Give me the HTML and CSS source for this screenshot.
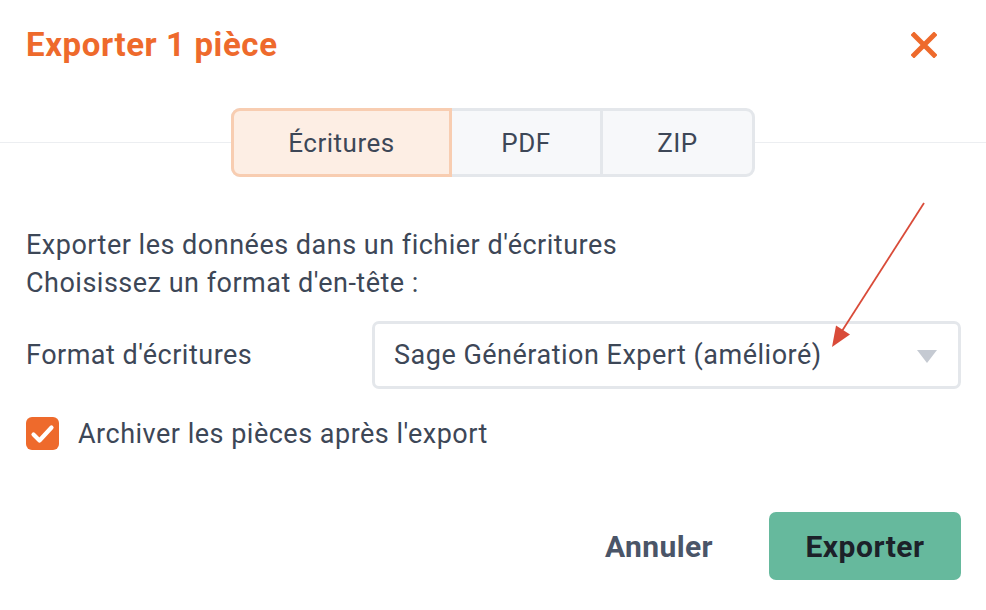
FILE: index.html
```html
<!DOCTYPE html>
<html lang="fr">
<head>
<meta charset="utf-8">
<title>Exporter 1 pièce</title>
<link rel="stylesheet" href="styles.css">
</head>
<body>
<div class="dialog">
  <header class="dialog-header">
    <h1 class="dialog-title">Exporter 1 pièce</h1>
    <button class="close-btn" aria-label="Fermer">
      <svg width="26" height="26" viewBox="0 0 26 26"><path d="M3 3 L23 23 M23 3 L3 23" stroke="#ee6a2c" stroke-width="5" stroke-linecap="square" fill="none"/></svg>
    </button>
  </header>

  <div class="tab-row">
    <div class="tab-line"></div>
    <div class="tabs">
      <div class="tab active">Écritures</div>
      <div class="tab pdf">PDF</div>
      <div class="tab zip">ZIP</div>
    </div>
    <div class="tab-line"></div>
  </div>

  <div class="dialog-body">
    <p class="intro">Exporter les données dans un fichier d'écritures<br>Choisissez un format d'en-tête :</p>

    <div class="field-row">
      <label class="field-label">Format d'écritures</label>
      <div class="select">
        <span class="select-value">Sage Génération Expert (amélioré)</span>
        <svg class="caret" width="20" height="13" viewBox="0 0 20 13"><polygon points="0,0 20,0 10,13" fill="#c5cad2"/></svg>
      </div>
    </div>

    <div class="check-row">
      <span class="checkbox">
        <svg width="25" height="20" viewBox="0 0 25 20"><path d="M3.5 10.5 L9.5 16.5 L21.5 3.5" stroke="#fff" stroke-width="4.2" fill="none" stroke-linecap="round" stroke-linejoin="round"/></svg>
      </span>
      <span class="check-label">Archiver les pièces après l'export</span>
    </div>
  </div>

  <footer class="dialog-footer">
    <button class="btn-cancel">Annuler</button>
    <button class="btn-export">Exporter</button>
  </footer>

  <svg class="annotation" width="986" height="610" viewBox="0 0 986 610">
    <line x1="924" y1="203" x2="842" y2="331" stroke="#d94b39" stroke-width="1.8"/>
    <polygon points="832,347 836,325.5 850,334.5" fill="#d94b39"/>
  </svg>
</div>
</body>
</html>
```

FILE: styles.css
```css
* { box-sizing: border-box; }
html, body { margin: 0; padding: 0; background: #fff; }
body {
  font-family: Roboto, "Liberation Sans", sans-serif;
  color: #3d4757;
  width: 986px;
  height: 610px;
  overflow: hidden;
}
.dialog {
  position: relative;
  width: 986px;
  height: 610px;
}
.dialog-header {
  height: 88px;
  display: flex;
  align-items: center;
  justify-content: space-between;
  padding: 0 49px 0 26px;
}
.dialog-title {
  margin: 0;
  font-size: 33px;
  font-weight: 700;
  color: #ee6a2c;
  letter-spacing: 0.6px;
}
.close-btn {
  border: 0;
  background: none;
  padding: 0;
  width: 26px;
  height: 26px;
  display: flex;
  margin-top: 2px;
}
.tab-row {
  margin-top: 20px;
  display: flex;
  align-items: center;
}
.tab-line {
  flex: 1;
  height: 1.5px;
  background: #eceef1;
}
.tabs {
  display: flex;
  height: 69px;
  border: 3px solid #e4e7eb;
  border-radius: 9px;
  background: #f7f8fa;
}
.tab {
  display: flex;
  align-items: center;
  justify-content: center;
  font-size: 26px;
  letter-spacing: 0.5px;
  color: #3d4757;
}
.tab.active {
  width: 221px;
  margin: -3px 0 -3px -3px;
  border: 3px solid #f8cdb1;
  border-radius: 9px 0 0 9px;
  background: #fdeee4;
}
.tab.pdf {
  width: 151px;
  border-right: 3px solid #e4e7eb;
}
.tab.zip {
  width: 149px;
}
.dialog-body {
  padding: 0 25px 0 26px;
  font-size: 27px;
  letter-spacing: 0.5px;
}
.intro {
  margin: 49px 0 0;
  line-height: 38px;
}
.field-row {
  margin-top: 19px;
  display: flex;
  align-items: center;
}
.field-label {
  width: 346px;
}
.select {
  flex: 1;
  height: 68px;
  border: 3px solid #e4e7eb;
  border-radius: 7px;
  display: flex;
  align-items: center;
  justify-content: space-between;
  padding: 0 21px 0 19px;
}
.caret { margin-top: 2px; }
.check-row {
  margin-top: 28px;
  display: flex;
  align-items: center;
  gap: 19px;
}
.checkbox {
  width: 33px;
  height: 33px;
  border-radius: 6px;
  background: #ee6a2c;
  display: flex;
  align-items: center;
  justify-content: center;
}
.dialog-footer {
  margin-top: 62px;
  padding: 0 25px 0 26px;
  display: flex;
  justify-content: flex-end;
  align-items: center;
  gap: 56px;
}
.btn-cancel {
  border: 0;
  background: none;
  padding: 0;
  font-family: inherit;
  font-size: 30px;
  letter-spacing: 0.4px;
  font-weight: 700;
  color: #4a5568;
}
.btn-export {
  width: 192px;
  height: 68px;
  border: 0;
  border-radius: 7px;
  background: #66b99d;
  font-family: inherit;
  font-size: 30px;
  letter-spacing: 0.5px;
  font-weight: 700;
  color: #1c2129;
}
.annotation {
  position: absolute;
  left: 0;
  top: 0;
  pointer-events: none;
}
```
